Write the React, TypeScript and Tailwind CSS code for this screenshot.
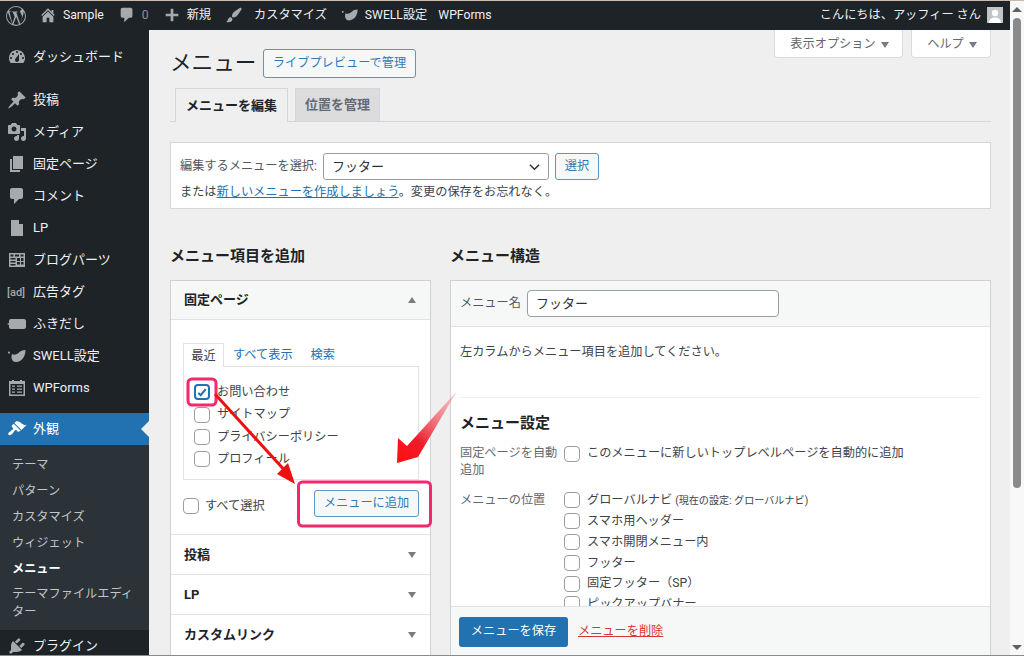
import { ReactNode } from "react";

const P = {
  dashboard:
    "M3.76 16h12.48c1.1-1.37 1.76-3.11 1.76-5 0-4.42-3.58-8-8-8s-8 3.58-8 8c0 1.89.66 3.63 1.76 5zM10 4c.55 0 1 .45 1 1s-.45 1-1 1-1-.45-1-1 .45-1 1-1zM6 6c.55 0 1 .45 1 1s-.45 1-1 1-1-.45-1-1 .45-1 1-1zm8 0c.55 0 1 .45 1 1s-.45 1-1 1-1-.45-1-1 .45-1 1-1zm-5.37 5.55L12 7v6c0 1.1-.9 2-2 2s-2-.9-2-2c0-.57.24-1.08.63-1.45zM4 10c.55 0 1 .45 1 1s-.45 1-1 1-1-.45-1-1 .45-1 1-1zm12 0c.55 0 1 .45 1 1s-.45 1-1 1-1-.45-1-1 .45-1 1-1z",
  pin: "M10.44 3.02l1.82-1.82 6.36 6.35-1.83 1.82c-1.05-.68-2.48-.57-3.41.36l-.75.75c-.92.93-1.04 2.35-.35 3.41l-1.83 1.82-2.41-2.41-2.8 2.79c-.42.42-3.38 2.71-3.8 2.29s1.86-3.39 2.28-3.81l2.79-2.79L4.1 9.36l1.83-1.82c1.05.69 2.48.57 3.4-.36l.75-.75c.93-.92 1.05-2.35.36-3.41z",
  media:
    "M13 11V4c0-.55-.45-1-1-1h-1.67L9 1H5L3.67 3H2c-.55 0-1 .45-1 1v7c0 .55.45 1 1 1h10c.55 0 1-.45 1-1zM7 4.5c1.38 0 2.5 1.12 2.5 2.5S8.38 9.5 7 9.5 4.5 8.38 4.5 7 5.62 4.5 7 4.5zM14 6h5v10.5c0 1.38-1.12 2.5-2.5 2.5S14 17.88 14 16.5s1.12-2.5 2.5-2.5c.17 0 .34.02.5.05V9h-3V6zm-4 8.05V13h2v3.5c0 1.38-1.12 2.5-2.5 2.5S7 17.88 7 16.5 8.12 14 9.5 14c.17 0 .34.02.5.05z",
  page: "M6 15V2h10v13H6zm-1 1h8v2H3V5h2v11z",
  comment: "M5 2h9c1.1 0 2 .9 2 2v7c0 1.1-.9 2-2 2h-2l-5 5v-5H5c-1.1 0-2-.9-2-2V4c0-1.1.9-2 2-2z",
  lp: "M4 2h8l4 4v12H4V2zm8 0v4h4z",
  parts: "M2 3h16v14H2V3zm1.5 1.5v2h3v-2zm4.5 0v2h4v-2zm5.5 0v2h3v-2zM3.5 8v1.500h5V8zm0 3v1.500h5V11zm0 3v1.500h5V14zM10 8v3h3V8zm4 0v3h2.500V8zm-4 4v2.500h3V12zm4 0v2.500h2.500V12z",
  bubble: "M4 5h13c1.1 0 2 .9 2 2v6c0 1.1-.9 2-2 2H4c-1.1 0-2-.9-2-2v-2L0 10l2-1V7c0-1.1.9-2 2-2z",
  swell: "M2 5.500a1 1 0 1 0 .01 0zM5 8c2 1.500 5 .5 7-1.500 1.500-1.500 3.500-2.500 6.500-2.500 0 6-3.500 12-9.500 12-3.500 0-5.500-3.500-4-8z",
  forms: "M2 3h3v-1h2v1h6v-1h2v1h3v15H2V3zm1.500 3v10.500h13V6zM5 7.500h3v1.200H5zm5 0h5v1.200h-5zM5 10.500h3v1.200H5zm5 0h5v1.200h-5zm-5 3h3v1.200H5zm5 0h5v1.200h-5z",
  brush:
    "M14.48 11.06L7.41 3.99l1.5-1.5c.5-.56 2.3-.47 3.51.32 1.21.8 1.43 1.28 2.91 2.1 1.18.64 2.45 1.26 4.45.85zm-.71.71L6.7 4.7 4.93 6.47c-.39.39-.39 1.02 0 1.41l1.06 1.06c.39.39.39 1.03 0 1.42-.6.6-1.43 1.11-2.21 1.69-.35.26-.7.53-1.01.84C1.43 13.23.65 15 1.5 15.85c.8.84 2.63.07 4.03-1.27.31-.31.58-.66.84-1.01.58-.78 1.09-1.61 1.69-2.21.39-.39 1.03-.39 1.42 0l1.06 1.06c.39.39 1.02.39 1.41 0z",
  plugin:
    "M13.11 4.36L9.87 7.6 8 5.73l3.24-3.24c.35-.34 1.05-.2 1.56.32.52.51.66 1.21.31 1.55zm-8 1.77l.91-1.12 9.01 9.01-1.19.84c-.71.71-2.63 1.16-3.82 1.16H6.14L4.9 17.26c-.59.59-1.54.59-2.12 0-.59-.58-.59-1.53 0-2.12l1.24-1.24v-3.88c0-1.13.4-3.19 1.09-3.89zm7.26 3.97l3.24-3.24c.34-.35 1.04-.21 1.55.31.52.51.66 1.21.31 1.55l-3.24 3.25z",
  home: "M16 8.500l1.530 1.530-1.060 1.060L10 4.620l-6.470 6.470-1.060-1.060L10 2.500l4 4v-2h2v4zm-6-2.460l6 5.990V18h-4.500v-5h-3v5H4v-5.970z",
  plus: "M17 8.500v3h-5.500V17h-3v-5.500H3v-3h5.500V3h3v5.500z",
  customize:
    "M18.33 3.570s.27-.8-.31-1.360c-.53-.52-1.220-.24-1.220-.24-.61.3-5.760 3.470-7.670 5.570-.86.96-2.060 3.790-1.090 4.820.92.98 3.960-.17 4.790-1 2.060-2.060 5.210-7.170 5.500-7.790zM1.400 17.650c2.370-1.560 1.460-3.410 3.230-4.640.93-.65 2.220-.62 3.080.29.63.67.8 2.570-.16 3.460-1.570 1.450-4 1.550-6.150.89z",
};

const Dash = ({ d, className = "w-5 h-5 fill-[#a7aaad]" }: { d: string; className?: string }) => (
  <svg viewBox="0 0 20 20" className={className}>
    <path d={d} fillRule="evenodd" />
  </svg>
);

const WpLogo = () => (
  <svg viewBox="0 0 20 20" className="w-5 h-5 fill-[#a7aaad]">
    <path
      fillRule="evenodd"
      d="M10 0a10 10 0 1 0 0 20 10 10 0 0 0 0-20zm0 1a9 9 0 0 1 6.100 2.380c-1.200-.05-2 1-2 2 0 .9.500 1.600 1 2.500.4.700.900 1.600.900 2.900 0 .9-.350 2-.800 3.400l-1.050 3.500-3.800-11.300c.6-.05 1.200-.1 1.200-.1.550-.07.5-.88-.05-.85 0 0-1.700.13-2.800.13-1 0-2.700-.13-2.700-.13-.55-.03-.62.82-.07.85 0 0 .52.05 1.080.1l1.600 4.400-2.250 6.750L3.400 5.600c.6-.03 1.200-.1 1.200-.1.55-.07.480-.87-.07-.84 0 0-1.700.13-2 .13A9 9 0 0 1 10 1zM1.900 6.300l4.400 12A9 9 0 0 1 1.900 6.300zM10.200 10.700l2.750 7.500a9 9 0 0 1-5.500.15zM17.800 5.700A9 9 0 0 1 14.100 18l2.700-7.900c.5-1.300.7-2.300.7-3.200 0-.4 0-.8.300-1.200z"
    />
  </svg>
);

const Tri = ({ up = false }: { up?: boolean }) => (
  <span
    className={`block w-0 h-0 border-x-[4.5px] border-x-transparent ${
      up ? "border-b-[6px] border-b-[#787c82]" : "border-t-[6px] border-t-[#787c82]"
    }`}
  />
);

const Box = ({ checked = false }: { checked?: boolean }) => (
  <span
    className={`shrink-0 flex items-center justify-center w-4 h-4 rounded-[4px] bg-white border ${
      checked ? "border-[#2271b1] border-2" : "border-[#9a9da1]"
    }`}
  >
    {checked && (
      <svg viewBox="0 0 16 16" className="w-[15px] h-[15px]">
        <path d="M3 8.500l3.200 3.200L13 3.500" fill="none" stroke="#2271b1" strokeWidth="2.800" />
      </svg>
    )}
  </span>
);

const BarItem = ({ icon, children }: { icon?: ReactNode; children: ReactNode }) => (
  <div className="flex items-center gap-[6px]">
    {icon}
    <span>{children}</span>
  </div>
);

const barIcon = "w-[18px] h-[18px] fill-[#a7aaad]";

const sideItems: [ReactNode, string][] = [
  [<Dash d={P.pin} />, "投稿"],
  [<Dash d={P.media} />, "メディア"],
  [<Dash d={P.page} />, "固定ページ"],
  [<Dash d={P.comment} />, "コメント"],
  [<Dash d={P.lp} />, "LP"],
  [<Dash d={P.parts} />, "ブログパーツ"],
  [<span className="text-[11px] leading-none font-medium text-[#a7aaad] whitespace-nowrap">[ad]</span>, "広告タグ"],
  [<Dash d={P.bubble} />, "ふきだし"],
  [<Dash d={P.swell} />, "SWELL設定"],
  [<Dash d={P.forms} />, "WPForms"],
];

const SideRow = ({ icon, label }: { icon: ReactNode; label: string }) => (
  <div className="h-8 flex items-center text-[13px] text-[#f0f0f1]">
    <span className="w-[33px] pl-[7px] flex justify-start">{icon}</span>
    <span>{label}</span>
  </div>
);

const Sidebar = () => (
  <aside className="w-[149px] shrink-0 bg-[#1d2327] pt-[11px]">
    <SideRow icon={<Dash d={P.dashboard} />} label="ダッシュボード" />
    <div className="h-[11px]" />
    {sideItems.map(([icon, label]) => (
      <SideRow key={label} icon={icon} label={label} />
    ))}
    <div className="h-[9px]" />
    <div className="relative h-8 flex items-center bg-[#2271b1] text-[13px] text-white">
      <span className="w-[33px] pl-[7px]">
        <Dash d={P.brush} className="w-5 h-5 fill-white" />
      </span>
      <span>外観</span>
      <span className="absolute right-0 top-[8px] w-0 h-0 border-y-[8px] border-y-transparent border-r-[8px] border-r-[#efefef]" />
    </div>
    <div className="bg-[#2c3338] h-[185px] pt-[7px] text-[12.200px] text-[#c3c4c7]">
      {["テーマ", "パターン", "カスタマイズ", "ウィジェット"].map((t) => (
        <div key={t} className="h-[26px] px-3 flex items-center">
          {t}
        </div>
      ))}
      <div className="h-[26px] px-3 flex items-center font-bold text-white">メニュー</div>
      <div className="px-3 pt-[3px] leading-[18px]">
        テーマファイルエディ
        <br />
        ター
      </div>
    </div>
    <SideRow icon={<Dash d={P.plugin} />} label="プラグイン" />
  </aside>
);

const AdminBar = () => (
  <header className="h-[29px] shrink-0 bg-[#1d2327] flex items-center justify-between pl-[6px] pr-[7px] text-[12.200px] text-[#f0f0f1]">
    <div className="flex items-center">
      <WpLogo />
      <div className="ml-[13px] flex items-center gap-[14px]">
        <BarItem icon={<Dash d={P.home} className={barIcon} />}>Sample</BarItem>
        <div className="flex items-center gap-[6px]">
          <Dash d={P.comment} className={barIcon} />
          <span className="text-[#8c8f94]">0</span>
        </div>
        <BarItem icon={<Dash d={P.plus} className={barIcon} />}>新規</BarItem>
        <BarItem icon={<Dash d={P.customize} className={barIcon} />}>
          <span className="ml-[5px]">カスタマイズ</span>
        </BarItem>
        <BarItem icon={<Dash d={P.swell} className={barIcon} />}>SWELL設定</BarItem>
        <span className="-ml-[3px]">WPForms</span>
      </div>
    </div>
    <div className="flex items-center gap-[6px]">
      <span>こんにちは、アッフィー さん</span>
      <svg viewBox="0 0 16 16" className="w-4 h-4 bg-[#c3c4c7]">
        <circle cx="8" cy="6" r="3.200" fill="#fff" />
        <path d="M2 16c0-4 3-5.500 6-5.500s6 1.500 6 5.500z" fill="#fff" />
      </svg>
    </div>
  </header>
);

const outlineBtn =
  "flex items-center justify-center rounded-[3px] border border-[#5a96c8] bg-[#f6f7f7] text-[#2f7ab8] text-[12.200px]";

const AccHead = ({ label }: { label: string }) => (
  <div className="h-10 pl-[13px] pr-3 flex items-center justify-between border-t border-[#e2e2e4] text-[13px] font-bold text-[#1d2327] bg-white">
    <span>{label}</span>
    <span className="mr-[2px]">
      <Tri />
    </span>
  </div>
);

const AddColumn = () => (
  <section className="w-[261px] shrink-0">
    <h2 className="h-[24px] pt-[2px] flex items-center text-[15px] font-bold text-[#1d2327]">メニュー項目を追加</h2>
    <div className="mt-[13px] h-[380px] overflow-hidden border-x border-t border-[#cfd0d2] bg-white">
      <div className="h-[39px] pl-[13px] pr-3 flex items-center justify-between bg-[#f6f7f7] text-[13px] font-bold text-[#1d2327] border-b border-[#e2e2e4]">
        <span>固定ページ</span>
        <span className="mr-[2px]">
          <Tri up />
        </span>
      </div>
      <div className="h-[214px] px-3 pt-[23px]">
        <div className="flex items-end text-[12.200px] relative z-10">
          <span className="h-[24px] w-[41px] pt-px flex items-center justify-center border-x border-t border-[#e2e2e4] bg-white text-[#3c434a]">
            最近
          </span>
          <span className="h-[24px] ml-[9px] pt-px flex items-center text-[#2271b1]">すべて表示</span>
          <span className="h-[24px] ml-[18px] pt-px flex items-center text-[#2271b1]">検索</span>
        </div>
        <div className="-mt-px h-[114px] w-[236px] border border-[#e2e2e4] pl-[10px] pt-[14px] text-[12.200px] text-[#3c434a]">
          {["お問い合わせ", "サイトマップ", "プライバシーポリシー", "プロフィール"].map((t, i) => (
            <label key={t} className="h-[22.400px] flex items-center gap-[7px]">
              <Box checked={i === 0} />
              {t}
            </label>
          ))}
        </div>
        <div className="mt-[10px] w-[236px] flex items-center justify-between">
          <label className="mt-[6px] flex items-center gap-[6px] text-[12.200px] text-[#3c434a]">
            <Box />
            すべて選択
          </label>
          <span className={`${outlineBtn} w-[105px] h-[27px]`}>メニューに追加</span>
        </div>
      </div>
      <AccHead label="投稿" />
      <AccHead label="LP" />
      <AccHead label="カスタムリンク" />
    </div>
  </section>
);

const locations = [
  <>
    グローバルナビ <span className="text-[10.100px]">(現在の設定: グローバルナビ)</span>
  </>,
  "スマホ用ヘッダー",
  "スマホ開閉メニュー内",
  "フッター",
  "固定フッター（SP）",
  "ピックアップバナー",
];

const StructureColumn = () => (
  <section className="flex-1">
    <h2 className="h-[24px] pt-[2px] flex items-center text-[15px] font-bold text-[#1d2327]">メニュー構造</h2>
    <div className="mt-[13px] h-[378px] flex flex-col border-x border-t border-[#cfd0d2] bg-white">
      <div className="h-[46px] shrink-0 px-[9px] flex items-center gap-[6px] bg-[#f6f7f7] border-b border-[#e2e2e4] text-[12.200px] text-[#50575e]">
        メニュー名
        <span className="w-[252px] h-[27px] flex items-center px-2 bg-white border border-[#9a9da1] rounded-[4px] text-[13px] text-[#2c3338]">
          フッター
        </span>
      </div>
      <div className="flex-1 overflow-hidden px-[9px]">
        <p className="pt-[16px] h-[70px] text-[12.200px] leading-[18px] text-[#3c434a]">
          左カラムからメニュー項目を追加してください。
        </p>
        <div className="border-t border-[#f0f0f1] pt-[15px]">
          <h3 className="h-[20px] flex items-center text-[15px] font-bold text-[#1d2327]">メニュー設定</h3>
          <div className="mt-[12px] flex text-[12.200px] text-[#3c434a]">
            <div className="w-[104px] shrink-0 text-[#646970] leading-[17px]">固定ページを自動追加</div>
            <label className="flex items-center gap-[7px] h-[17px]">
              <Box />
              このメニューに新しいトップレベルページを自動的に追加
            </label>
          </div>
          <div className="mt-[11px] flex text-[12.200px] text-[#3c434a]">
            <div className="w-[104px] shrink-0 text-[#646970] h-[21px] flex items-center">メニューの位置</div>
            <div>
              {locations.map((l, i) => (
                <label key={i} className="h-[20.800px] flex items-center gap-[7px]">
                  <Box />
                  <span>{l}</span>
                </label>
              ))}
            </div>
          </div>
        </div>
      </div>
      <div className="h-[52px] shrink-0 px-[8px] pb-[2px] flex items-center gap-[10px] bg-[#f6f7f7] border-t border-[#e2e2e4] text-[12.200px]">
        <span className="w-[109px] h-[30px] flex items-center justify-center rounded-[3px] bg-[#2271b1] text-white">
          メニューを保存
        </span>
        <span className="text-[#d63638] underline">メニューを削除</span>
      </div>
    </div>
  </section>
);

const Main = () => (
  <main className="flex-1 min-w-0 pl-[21px] pr-[19px] bg-[#efefef]">
    <div className="flex justify-end gap-2 h-[28px] text-[12.200px] text-[#646970]">
      <span className="w-[129px] pt-[2px] pl-[2px] flex items-center justify-center gap-[5px] bg-white border-x border-b border-[#dcdcde] rounded-b-[4px]">
        表示オプション <Tri />
      </span>
      <span className="w-[80px] pt-[2px] pl-[2px] flex items-center justify-center gap-[5px] bg-white border-x border-b border-[#dcdcde] rounded-b-[4px]">
        ヘルプ <Tri />
      </span>
    </div>
    <div className="-mt-[9px] flex items-center h-[29px]">
      <h1 className="text-[21.600px] text-[#1d2327] font-normal w-[93px]">メニュー</h1>
      <span className={`${outlineBtn} w-[153px] h-[29px]`}>ライブプレビューで管理</span>
    </div>
    <div className="mt-[10px] flex items-end gap-[7px] pl-[5px] h-[34px] border-b border-[#d6d6d8] text-[13px] font-bold">
      <span className="-mb-px h-[34px] w-[113px] flex items-center justify-center bg-[#efefef] border border-b-0 border-[#d6d6d8] text-[#1d2327]">
        メニューを編集
      </span>
      <span className="h-[33px] w-[85px] flex items-center justify-center bg-[#dcdcde] border border-b-0 border-[#d6d6d8] text-[#646970]">
        位置を管理
      </span>
    </div>
    <div className="mt-[20px] h-[67px] bg-white border border-[#d6d6d8] px-[9px] pt-[10px] text-[12.200px] text-[#3c434a]">
      <div className="flex items-center h-[27px]">
        <span className="text-[#50575e]">編集するメニューを選択:</span>
        <span className="ml-[6px] w-[226px] h-[27px] px-2 flex items-center justify-between bg-white border border-[#9a9da1] rounded-[3px] text-[13px] text-[#2c3338]">
          フッター
          <svg viewBox="0 0 12 8" className="w-[11px] h-[8px]">
            <path d="M1 1.500l5 5 5-5" fill="none" stroke="#2c3338" strokeWidth="1.600" />
          </svg>
        </span>
        <span className={`${outlineBtn} ml-[6px] w-[44px] h-[27px]`}>選択</span>
      </div>
      <p className="mt-[2px] leading-[20px]">
        または<span className="text-[#2271b1] underline">新しいメニューを作成しましょう</span>。変更の保存をお忘れなく。
      </p>
    </div>
    <div className="mt-[34px] flex gap-[19px]">
      <AddColumn />
      <StructureColumn />
    </div>
  </main>
);

const Scrollbar = () => (
  <div className="w-[14px] shrink-0 bg-[#f8f8f8] flex flex-col items-center relative">
    <span className="mt-[6px] w-0 h-0 border-x-[5px] border-x-transparent border-b-[5px] border-b-[#606060]" />
    <span className="mt-[6px] w-[8px] h-[470px] rounded-[4px] bg-[#8a8a8a]" />
    <span className="absolute bottom-[5px] w-0 h-0 border-x-[5px] border-x-transparent border-t-[5px] border-t-[#606060]" />
  </div>
);

// annotations drawn on top of the screenshot
const Notes = () => (
  <svg viewBox="0 0 1024 656" className="absolute inset-0 w-[1024px] h-[656px] pointer-events-none">
    <defs>
      <linearGradient id="fade" x1="457" y1="390" x2="400" y2="460" gradientUnits="userSpaceOnUse">
        <stop offset="0" stopColor="#f4a0a8" stopOpacity="0.5" />
        <stop offset="0.7" stopColor="#ee1c2c" />
        <stop offset="1" stopColor="#ff1010" />
      </linearGradient>
    </defs>
    <rect x="188" y="378" width="28" height="26" rx="4" fill="none" stroke="#f5286e" strokeWidth="3" />
    <rect x="298.500" y="481" width="132" height="44" rx="4" fill="none" stroke="#f5286e" strokeWidth="3" />
    <path d="M215 393L288 473" stroke="#ee1010" strokeWidth="3" />
    <path d="M295 483L277 473L288 462z" fill="#ee1010" />
    <path d="M457 390L418 456L397 462L398 437L407 445z" fill="url(#fade)" />
  </svg>
);

export default function App() {
  return (
    <div className="relative w-[1024px] h-[656px] overflow-hidden flex bg-[#efefef] border-t border-b border-t-[#cdbcae] border-b-[#8a8a8a] font-['Roboto','Noto_Sans_CJK_JP',sans-serif]">
      <div className="flex-1 min-w-0 flex flex-col">
        <AdminBar />
        <div className="flex flex-1 min-h-0">
          <Sidebar />
          <Main />
        </div>
      </div>
      <Scrollbar />
      <Notes />
    </div>
  );
}
